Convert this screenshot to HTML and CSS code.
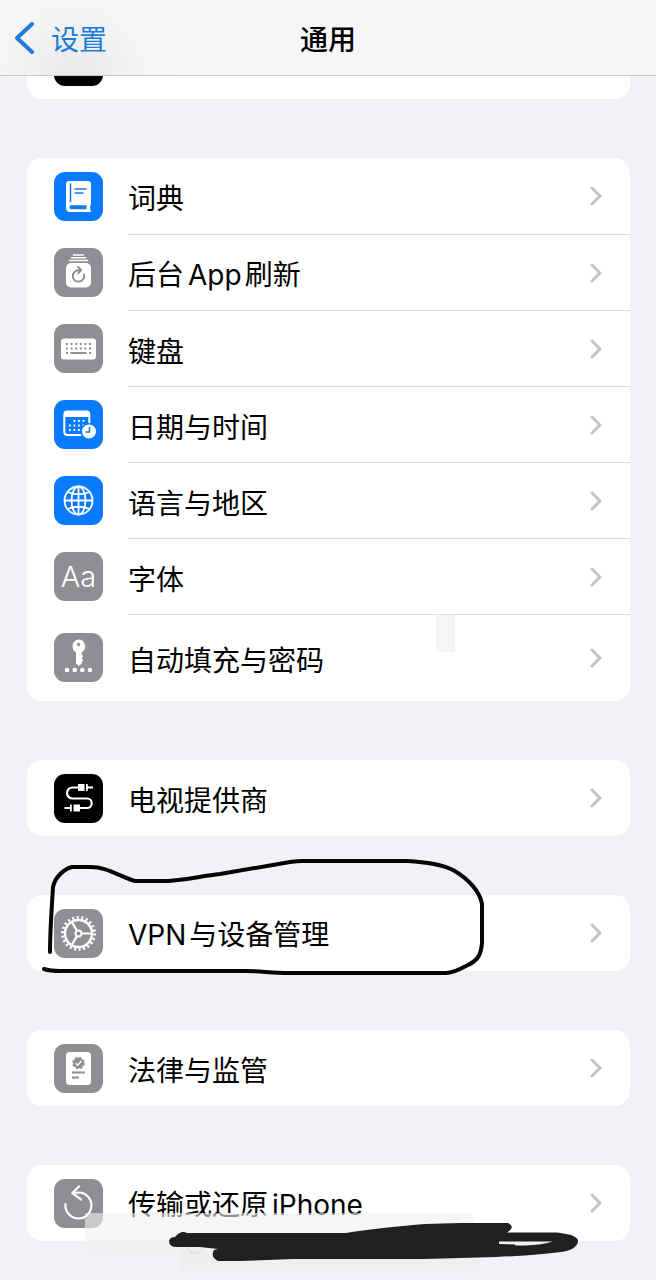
FILE: index.html
```
<!DOCTYPE html>
<html lang="zh-CN">
<head>
<meta charset="utf-8">
<meta name="viewport" content="width=device-width, initial-scale=1">
<title>通用</title>
<link rel="stylesheet" href="styles.css">
</head>
<body>
<svg class="defs">
  <symbol id="chevron" viewBox="0 0 12 20"><path d="M2 2l8 8-8 8" fill="none" stroke="#c4c4c6" stroke-width="3" stroke-linecap="round" stroke-linejoin="round"/></symbol>
</svg>

<header class="navbar">
  <a class="back" href="#">
    <svg width="20" height="34" viewBox="0 0 20 34"><path d="M17 3L2 17l15 14" fill="none" stroke="currentColor" stroke-width="4" stroke-linecap="round" stroke-linejoin="round"/></svg>
    <span>设置</span>
  </a>
  <h1>通用</h1>
</header>

<main>
  <!-- scrolled under the bar -->
  <ul class="group first">
    <li><a class="row" href="#" aria-label="CarPlay"><span class="icon black"></span></a></li>
  </ul>

  <ul class="group">
    <li><a class="row" href="#">
      <span class="icon blue"><svg viewBox="0 0 49 49"><path d="M15 9h19q3 0 3 3v19q0 2-1 4 0 2 1 5H16q-4 0-4-4V12q0-3 3-3z" fill="#fff"/><path d="M16.500 11.500v18.500M20.500 17h12M20.500 21h9" stroke="#1779e8" stroke-width="1.500"/><path d="M17 33.200h15.500v4H17q-3.500-2 0-4z" fill="#1779e8"/></svg></span>
      <span class="cell"><span>词典</span><svg class="chevron"><use href="#chevron"/></svg></span>
    </a></li>
    <li><a class="row" href="#">
      <span class="icon"><svg viewBox="0 0 49 49"><rect x="12" y="15" width="25" height="24.500" rx="5" fill="#fff"/><path d="M19.500 7h10M17.500 9.800h14M15.500 12.600h18" stroke="#fff" stroke-width="1.500" stroke-linecap="round"/><path d="M30 26.500a5.700 5.700 0 1 1-5.500-4.300h2M24.200 19l3 3.200-3 3.200" fill="none" stroke="#8e8e93" stroke-width="1.900" stroke-linecap="round" stroke-linejoin="round"/></svg></span>
      <span class="cell"><span>后台<span class="latin">App</span>刷新</span><svg class="chevron"><use href="#chevron"/></svg></span>
    </a></li>
    <li><a class="row" href="#">
      <span class="icon"><svg viewBox="0 0 49 49"><rect x="7" y="14.500" width="35" height="21" rx="3" fill="#fff"/><path d="M12 20h25M12 24.500h25" stroke="#8e8e93" stroke-width="2" stroke-dasharray="2 2.600"/><path d="M12 29h2M16.500 29h16M35 29h2" stroke="#8e8e93" stroke-width="2"/></svg></span>
      <span class="cell"><span>键盘</span><svg class="chevron"><use href="#chevron"/></svg></span>
    </a></li>
    <li><a class="row" href="#">
      <span class="icon blue"><svg viewBox="0 0 49 49"><rect x="10.300" y="11.500" width="25" height="23.500" rx="3" fill="none" stroke="#fff" stroke-width="2"/><path d="M10 17v-3q0-3 3-3h20q3 0 3 3v3z" fill="#fff"/><path d="M19.500 21h13M15 25.500h17M15 30h13" stroke="#fff" stroke-width="1.800" stroke-dasharray="1.800 2.700"/><circle cx="35" cy="31.500" r="7.800" fill="#fff" stroke="#0a7aff" stroke-width="1.600"/><path d="M35.500 27v5h-4" fill="none" stroke="#1779e8" stroke-width="1.500"/></svg></span>
      <span class="cell"><span>日期与时间</span><svg class="chevron"><use href="#chevron"/></svg></span>
    </a></li>
    <li><a class="row" href="#">
      <span class="icon blue"><svg viewBox="0 0 49 49" fill="none" stroke="#fff" stroke-width="1.800"><circle cx="24.500" cy="24.500" r="14"/><ellipse cx="24.500" cy="24.500" rx="7" ry="14"/><path d="M24.500 10.500v28M10.500 24.500h28M13.500 16q11 4.500 22 0M13.500 33q11-4.500 22 0"/></svg></span>
      <span class="cell"><span>语言与地区</span><svg class="chevron"><use href="#chevron"/></svg></span>
    </a></li>
    <li><a class="row" href="#">
      <span class="icon letters" aria-hidden="true">Aa</span>
      <span class="cell"><span>字体</span><svg class="chevron"><use href="#chevron"/></svg></span>
    </a></li>
    <li><a class="row tall" href="#">
      <span class="icon"><svg viewBox="0 0 49 49" fill="#fff"><path d="M24.500 6.500a6.800 6.800 0 0 1 3.200 12.700v2.300l1.500 1.800-1.500 2 1.500 2-1.500 2v1.500L24.700 33l-2.700-2.500V19.200a6.800 6.800 0 0 1 2.500-12.700z"/><circle cx="24.500" cy="11.500" r="1.700" fill="#8e8e93"/><circle cx="13" cy="37" r="2.300"/><circle cx="20.700" cy="37" r="2.300"/><circle cx="28.300" cy="37" r="2.300"/><circle cx="36" cy="37" r="2.300"/></svg></span>
      <span class="cell"><span>自动填充与密码</span><svg class="chevron"><use href="#chevron"/></svg></span>
      <i class="smudge"></i>
    </a></li>
  </ul>

  <ul class="group">
    <li><a class="row" href="#">
      <span class="icon black"><svg viewBox="0 0 49 49"><path d="M24 13.500h-5.500a5.500 5.500 0 0 0 0 11h14.500a4.750 4.750 0 0 1 0 9.500H26M32.500 13.500h6.500M10.500 34h6" fill="none" stroke="#fff" stroke-width="2.200"/><path d="M24 10h6.500v7H24zM32 10h1.800v7H32zM19.500 30.500H26v7h-6.500zM16 30.500h1.800v7H16z" fill="#fff"/></svg></span>
      <span class="cell"><span>电视提供商</span><svg class="chevron"><use href="#chevron"/></svg></span>
    </a></li>
  </ul>

  <ul class="group">
    <li><a class="row" href="#">
      <span class="icon"><svg viewBox="0 0 49 49" fill="none" stroke="#fff"><circle cx="24.500" cy="24.500" r="16" stroke-width="3" stroke-dasharray="2 2.570"/><circle cx="24.500" cy="24.500" r="13.500" stroke-width="2.400"/><circle cx="24.500" cy="24.500" r="3" stroke-width="2"/><path d="M27.500 24.500h10.500M23 21.900l-5.300-9.100M23 27.100l-5.300 9.100" stroke-width="2.200"/></svg></span>
      <span class="cell"><span><span class="latin lead">VPN</span>与设备管理</span><svg class="chevron"><use href="#chevron"/></svg></span>
    </a></li>
    <li class="loop" aria-hidden="true"><svg width="460" height="130" viewBox="37 855 460 130"><path d="M50 952C50 930 52 905 53 887C55 877 64 869 72 867H90C108 867 118 876 135 881H168C185 880 202 876 220 874L290 862Q297 861 303 861H407C427 862 441 864 453 870C469 879 480 892 482 904V943C481 956 477 961 466 966Q453 973 446 973H290C270 973 262 971 245 971H60Q50 971 44 969" fill="none" stroke="#050505" stroke-width="4" stroke-linecap="round" stroke-linejoin="round"/></svg></li>
  </ul>

  <ul class="group">
    <li><a class="row" href="#">
      <span class="icon"><svg viewBox="0 0 49 49"><rect x="12" y="8" width="25" height="33" rx="3.500" fill="#fff"/><circle cx="24.500" cy="19" r="5.200" fill="#8e8e93"/><circle cx="24.500" cy="19" r="5.300" fill="none" stroke="#8e8e93" stroke-width="2" stroke-dasharray="2.400 1.760"/><path d="M21.800 19.300l2 2 3.600-4.500" fill="none" stroke="#fff" stroke-width="1.400"/><path d="M18 28.500h13M18 33.500h7" stroke="#8e8e93" stroke-width="1.800"/></svg></span>
      <span class="cell"><span>法律与监管</span><svg class="chevron"><use href="#chevron"/></svg></span>
    </a></li>
  </ul>

  <ul class="group">
    <li><a class="row" href="#">
      <span class="icon"><svg viewBox="0 0 49 49"><path d="M11.500 25a13 13 0 1 0 13-11.500l-6 .5M25 7.500L18.300 14l8.700 6.500" fill="none" stroke="#fff" stroke-width="2.200" stroke-linecap="round" stroke-linejoin="round"/></svg></span>
      <span class="cell"><span>传输或还原<span class="latin">iPhone</span></span><svg class="chevron"><use href="#chevron"/></svg></span>
    </a></li>
    <li class="scribble" aria-hidden="true"><svg width="510" height="68" viewBox="80 1208 510 68">
      <path d="M85 1213H473V1255H130L85 1252z" fill="#f0f0f1" fill-opacity=".6"/>
      <path d="M181 1250H478V1271H181z" fill="#eeeeef" fill-opacity=".8"/>
      <circle cx="195" cy="1245" r="8" fill="none" stroke="#e2e2e4" stroke-width="2"/>
      <path d="M169 1241Q170 1237 175 1237Q181 1230 187 1233H346C370 1229 400 1226 425 1224L460 1223L508 1223Q516 1227 507 1232.500H557C571 1234 578 1237 578 1241C578 1247 570 1251 561 1252C540 1255 515 1256 496 1257L425 1259H293L240 1261H218Q210 1257 214 1250L218 1249L200 1247H177Q169 1247 169 1241zM499 1241.500V1244L515 1244.500V1245.500L525 1245.500Q542 1245 553 1241.500z" fill="#202020" fill-rule="evenodd"/>
    </svg></li>
  </ul>
</main>
</body>
</html>
```
FILE: styles.css
```
* { box-sizing: border-box; }
body {
  margin: 0;
  background: #f2f1f6;
  color: #000;
  font: 28px/40px "Noto Sans CJK SC", sans-serif;
}
a { color: inherit; text-decoration: none; }
.defs { display: none; }

.navbar {
  position: sticky;
  top: 0;
  z-index: 2;
  display: grid;
  grid-template-columns: 1fr auto 1fr;
  align-items: center;
  height: 76px;
  padding: 0 15px;
  border-bottom: 1px solid #cbcbcd;
  background: radial-gradient(circle at 78px 76px, #e9e9ea, transparent 80px),
              linear-gradient(90deg, #f3f6f4, #f7f7f7 200px);
}
.navbar h1 { margin: 0; font-size: 28px; font-weight: 500; line-height: 40px; }
.back { display: flex; align-items: center; gap: 16px; color: #1f7bd8; }

.group {
  position: relative;
  margin: 0 26px 59px 27px;
  padding: 0;
  list-style: none;
  background: #fff;
  border-radius: 15px;
}
.group.first { margin-top: -53px; }
.group:last-child { margin-bottom: 39px; }

.row {
  position: relative;
  display: flex;
  align-items: center;
  gap: 25px;
  height: 76px;
  padding-left: 27px;
}
.row.tall { height: 87px; }

.icon {
  flex: none;
  width: 49px;
  height: 49px;
  border-radius: 11px;
  background: #8e8e93;
}
.icon svg { display: block; }
.icon.blue { background: #0a7aff; }
.icon.black { background: #000; }
.icon.letters {
  color: #fff;
  font: 300 29px/49px Inter, sans-serif;
  text-align: center;
}

.cell {
  flex: 1;
  display: flex;
  align-items: center;
  align-self: stretch;
  padding-right: 28px;
}
.cell > span { padding-top: 2px; }
.group li + li .cell { border-top: 1px solid #dcdcde; }
.latin { margin: 0 3px 0 4px; font-family: Inter, "Noto Sans CJK SC", sans-serif; }
.latin.lead { margin-left: 0; }
.chevron { width: 12px; height: 20px; margin-left: auto; }

/* pen marks over the list */
.smudge {
  position: absolute;
  top: 1px;
  left: 409px;
  width: 19px;
  height: 37px;
  background: #f5f5f5;
}
.loop, .scribble { position: absolute; z-index: 1; pointer-events: none; }
.loop { left: 10px; top: -40px; }
.scribble { left: 53px; top: 43px; }
.loop svg, .scribble svg { display: block; }
```
